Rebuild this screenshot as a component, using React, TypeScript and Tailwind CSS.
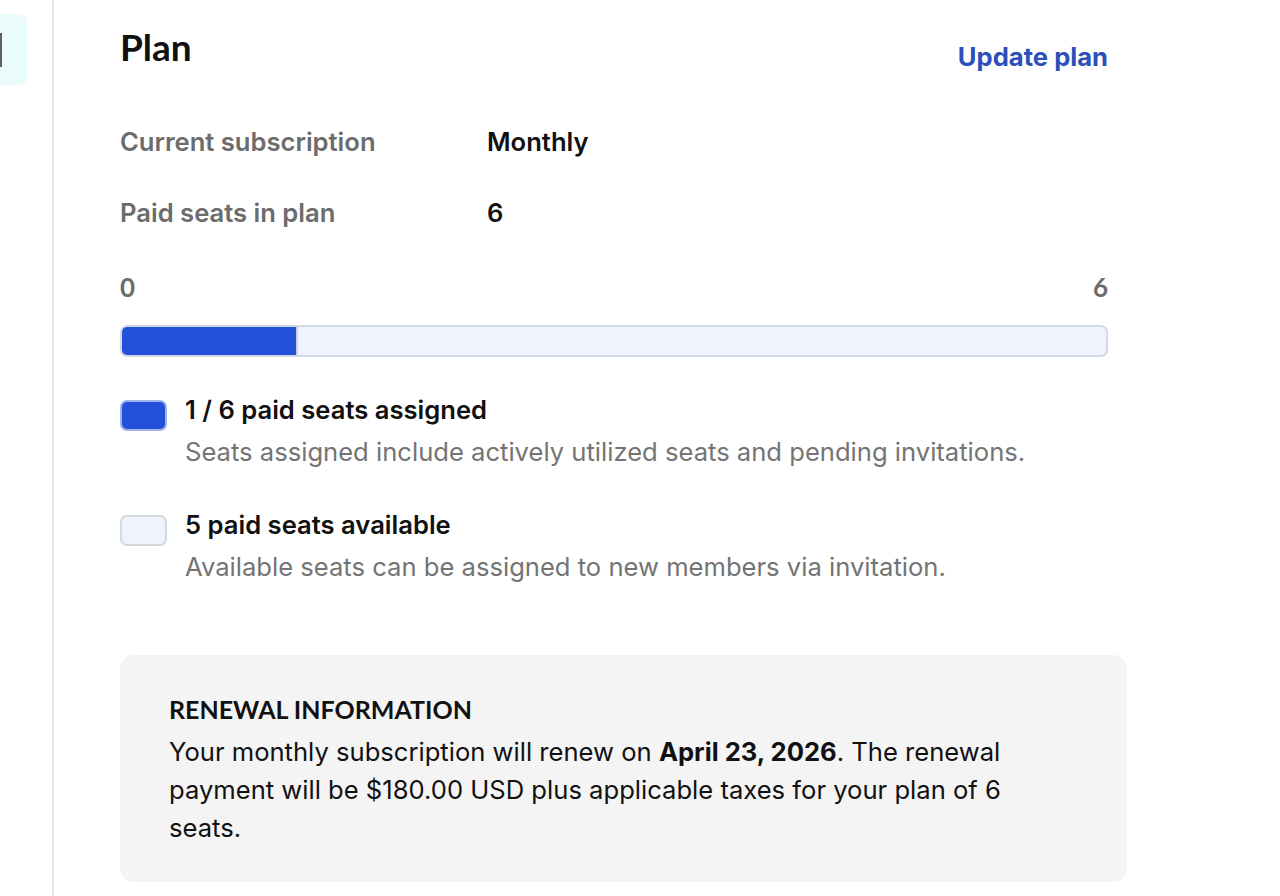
import React from 'react';

const heading = { fontFamily: '"Lato", "Open Sans", sans-serif' };

function LegendItem({
  swatch,
  title,
  text,
}: {
  swatch: string;
  title: string;
  text: string;
}) {
  return (
    <div className="flex gap-[18px]">
      <div className={`mt-[9px] h-[31px] w-[47px] shrink-0 rounded-[7px] ${swatch}`} />
      <div>
        <div className="text-[25.6px] font-semibold leading-[38px] text-[#111]">{title}</div>
        <div className="mt-[4px] text-[25.6px] leading-[38px] text-[#747474]">{text}</div>
      </div>
    </div>
  );
}

export default function App() {
  const used = 1;
  const total = 6;

  return (
    <div className="flex min-h-[896px] bg-white" style={{ fontFamily: 'Inter, "Liberation Sans", sans-serif' }}>
      {/* Collapsed sidebar */}
      <aside className="w-[54px] shrink-0 border-r-2 border-[#e4e4e4] pt-[14px]">
        <div className="flex h-[71px] w-[27px] items-center rounded-r-[8px] bg-[#e9fbfb]">
          <div className="h-[34px] w-[2px] bg-[#5f5f5f]" />
        </div>
      </aside>

      <main className="w-[1054px] pl-[66px] pt-[26px]">
        <div className="flex w-[988px] items-start justify-between">
          <h1 className="text-[37px] font-bold leading-[42px] text-[#111]" style={heading}>
            Plan
          </h1>
          <a className="mt-[12px] text-[25.6px] font-bold leading-[38px] text-[#2b50b9]">Update plan</a>
        </div>

        <div className="mt-[47px] flex flex-col gap-[33px]">
          <div className="flex text-[25.6px] font-semibold leading-[38px]">
            <div className="w-[367px] text-[#6c6c6c]">Current subscription</div>
            <div className="text-[#111]">Monthly</div>
          </div>
          <div className="flex text-[25.6px] font-semibold leading-[38px]">
            <div className="w-[367px] text-[#6c6c6c]">Paid seats in plan</div>
            <div className="text-[#111]">6</div>
          </div>
        </div>

        <div className="mt-[39px] w-[988px]">
          <div className="flex justify-between text-[26px] font-bold leading-[32px] text-[#6c6c6c]" style={heading}>
            <span>0</span>
            <span>{total}</span>
          </div>
          <div className="mt-[22px] flex h-[32px] overflow-hidden rounded-[7px] border-2 border-[#d3d9e6] bg-[#eff3fd]">
            <div
              className="h-full border-r-2 border-[#c9d1e6] bg-[#2350d8]"
              style={{ width: `calc(${(used / total) * 100}% + 12px)` }}
            />
          </div>
        </div>

        <div className="mt-[34px] flex flex-col gap-[35px]">
          <LegendItem
            swatch="bg-[#2350d8] border-2 border-[#9fb2ee]"
            title={`${used} / ${total} paid seats assigned`}
            text="Seats assigned include actively utilized seats and pending invitations."
          />
          <LegendItem
            swatch="bg-[#eff3fd] border-2 border-[#d4d8df]"
            title={`${total - used} paid seats available`}
            text="Available seats can be assigned to new members via invitation."
          />
        </div>

        <section className="mt-[69px] w-[1007px] rounded-[14px] bg-[#f4f4f5] px-[49px] pb-[35px] pt-[38px]">
          <h2 className="text-[25px] font-bold leading-[32px] text-[#111]" style={heading}>
            RENEWAL INFORMATION
          </h2>
          <p className="mt-[8px] max-w-[880px] text-[25.6px] leading-[38px] text-[#111]">
            Your monthly subscription will renew on <strong className="font-bold">April 23, 2026</strong>. The renewal
            payment will be $180.00 USD plus applicable taxes for your plan of 6 seats.
          </p>
        </section>
      </main>
    </div>
  );
}
